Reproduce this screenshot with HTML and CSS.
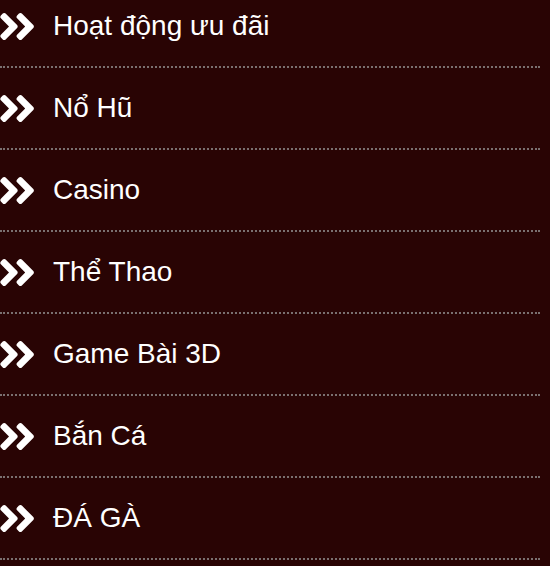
FILE: index.html
```html
<!DOCTYPE html>
<html lang="vi">
<head>
	<meta charset="UTF-8">
	<meta name="viewport" content="width=device-width, initial-scale=1.0">
	<title>Menu</title>
	<link rel="stylesheet" href="styles.css">
</head>
<body>
	<ul class="menu">
		<li><svg class="ico" viewBox="22 96 402 320"><path d="M224.3 273l-136 136c-9.4 9.4-24.6 9.4-33.9 0l-22.6-22.6c-9.4-9.4-9.4-24.6 0-33.9l96.4-96.4-96.4-96.4c-9.4-9.4-9.4-24.6 0-33.9L54.3 103c9.4-9.4 24.6-9.4 33.9 0l136 136c9.5 9.4 9.5 24.6.1 34zm192-34l-136-136c-9.4-9.4-24.6-9.4-33.9 0l-22.6 22.6c-9.4 9.4-9.4 24.6 0 33.9l96.4 96.4-96.4 96.4c-9.4 9.4-9.4 24.6 0 33.9l22.6 22.6c9.4 9.4 24.6 9.4 33.9 0l136-136c9.4-9.2 9.4-24.4 0-33.8z"/></svg><span>Hoạt động ưu đãi</span></li>
		<li><svg class="ico" viewBox="22 96 402 320"><path d="M224.3 273l-136 136c-9.4 9.4-24.6 9.4-33.9 0l-22.6-22.6c-9.4-9.4-9.4-24.6 0-33.9l96.4-96.4-96.4-96.4c-9.4-9.4-9.4-24.6 0-33.9L54.3 103c9.4-9.4 24.6-9.4 33.9 0l136 136c9.5 9.4 9.5 24.6.1 34zm192-34l-136-136c-9.4-9.4-24.6-9.4-33.9 0l-22.6 22.6c-9.4 9.4-9.4 24.6 0 33.9l96.4 96.4-96.4 96.4c-9.4 9.4-9.4 24.6 0 33.9l22.6 22.6c9.4 9.4 24.6 9.4 33.9 0l136-136c9.4-9.2 9.4-24.4 0-33.8z"/></svg><span>Nổ Hũ</span></li>
		<li><svg class="ico" viewBox="22 96 402 320"><path d="M224.3 273l-136 136c-9.4 9.4-24.6 9.4-33.9 0l-22.6-22.6c-9.4-9.4-9.4-24.6 0-33.9l96.4-96.4-96.4-96.4c-9.4-9.4-9.4-24.6 0-33.9L54.3 103c9.4-9.4 24.6-9.4 33.9 0l136 136c9.5 9.4 9.5 24.6.1 34zm192-34l-136-136c-9.4-9.4-24.6-9.4-33.9 0l-22.6 22.6c-9.4 9.4-9.4 24.6 0 33.9l96.4 96.4-96.4 96.4c-9.4 9.4-9.4 24.6 0 33.9l22.6 22.6c9.4 9.4 24.6 9.4 33.9 0l136-136c9.4-9.2 9.4-24.4 0-33.8z"/></svg><span>Casino</span></li>
		<li><svg class="ico" viewBox="22 96 402 320"><path d="M224.3 273l-136 136c-9.4 9.4-24.6 9.4-33.9 0l-22.6-22.6c-9.4-9.4-9.4-24.6 0-33.9l96.4-96.4-96.4-96.4c-9.4-9.4-9.4-24.6 0-33.9L54.3 103c9.4-9.4 24.6-9.4 33.9 0l136 136c9.5 9.4 9.5 24.6.1 34zm192-34l-136-136c-9.4-9.4-24.6-9.4-33.9 0l-22.6 22.6c-9.4 9.4-9.4 24.6 0 33.9l96.4 96.4-96.4 96.4c-9.4 9.4-9.4 24.6 0 33.9l22.6 22.6c9.4 9.4 24.6 9.4 33.9 0l136-136c9.4-9.2 9.4-24.4 0-33.8z"/></svg><span>Thể Thao</span></li>
		<li><svg class="ico" viewBox="22 96 402 320"><path d="M224.3 273l-136 136c-9.4 9.4-24.6 9.4-33.9 0l-22.6-22.6c-9.4-9.4-9.4-24.6 0-33.9l96.4-96.4-96.4-96.4c-9.4-9.4-9.4-24.6 0-33.9L54.3 103c9.4-9.4 24.6-9.4 33.9 0l136 136c9.5 9.4 9.5 24.6.1 34zm192-34l-136-136c-9.4-9.4-24.6-9.4-33.9 0l-22.6 22.6c-9.4 9.4-9.4 24.6 0 33.9l96.4 96.4-96.4 96.4c-9.4 9.4-9.4 24.6 0 33.9l22.6 22.6c9.4 9.4 24.6 9.4 33.9 0l136-136c9.4-9.2 9.4-24.4 0-33.8z"/></svg><span>Game Bài 3D</span></li>
		<li><svg class="ico" viewBox="22 96 402 320"><path d="M224.3 273l-136 136c-9.4 9.4-24.6 9.4-33.9 0l-22.6-22.6c-9.4-9.4-9.4-24.6 0-33.9l96.4-96.4-96.4-96.4c-9.4-9.4-9.4-24.6 0-33.9L54.3 103c9.4-9.4 24.6-9.4 33.9 0l136 136c9.5 9.4 9.5 24.6.1 34zm192-34l-136-136c-9.4-9.4-24.6-9.4-33.9 0l-22.6 22.6c-9.4 9.4-9.4 24.6 0 33.9l96.4 96.4-96.4 96.4c-9.4 9.4-9.4 24.6 0 33.9l22.6 22.6c9.4 9.4 24.6 9.4 33.9 0l136-136c9.4-9.2 9.4-24.4 0-33.8z"/></svg><span>Bắn Cá</span></li>
		<li><svg class="ico" viewBox="22 96 402 320"><path d="M224.3 273l-136 136c-9.4 9.4-24.6 9.4-33.9 0l-22.6-22.6c-9.4-9.4-9.4-24.6 0-33.9l96.4-96.4-96.4-96.4c-9.4-9.4-9.4-24.6 0-33.9L54.3 103c9.4-9.4 24.6-9.4 33.9 0l136 136c9.5 9.4 9.5 24.6.1 34zm192-34l-136-136c-9.4-9.4-24.6-9.4-33.9 0l-22.6 22.6c-9.4 9.4-9.4 24.6 0 33.9l96.4 96.4-96.4 96.4c-9.4 9.4-9.4 24.6 0 33.9l22.6 22.6c9.4 9.4 24.6 9.4 33.9 0l136-136c9.4-9.2 9.4-24.4 0-33.8z"/></svg><span>ĐÁ GÀ</span></li>
	</ul>
</body>
</html>
```

FILE: styles.css
```css
* {
    padding: 0;
    margin: 0;
    list-style: none;
    border: 0;
}

html, body {
    background: #290404;
    height: 100%;
    overflow: hidden;
}

.menu {
    width: 540px;
    margin-top: -14px;
    font-family: "Liberation Sans", Arial, sans-serif;
}

.menu li {
    height: 80px;
    display: flex;
    align-items: center;
    gap: 19px;
    border-bottom: 2px dotted #7a7070;
    color: #fff;
    font-size: 28px;
}

.menu .ico {
    width: 34px;
    height: 27px;
    fill: #fff;
    flex-shrink: 0;
}
```
